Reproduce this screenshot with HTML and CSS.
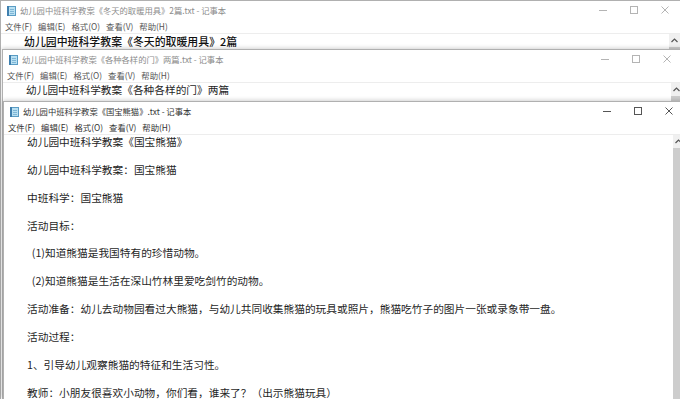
FILE: index.html
```html
<!DOCTYPE html>
<html lang="zh-CN">
<head>
    <meta charset="UTF-8">
    <meta name="viewport" content="width=device-width, initial-scale=1.0">
    <title>记事本</title>
    <link rel="stylesheet" href="styles.css">
</head>
<body>
    <div class="desktop">
        <!-- back window -->
        <section class="win win-back win-1">
            <header class="titlebar">
                <svg class="app-icon" viewBox="0 0 10 11"><rect x="1.5" y="1.5" width="8" height="9" fill="#b9e0f2" stroke="#5a9cc4"/><rect x="1" y="1" width="2" height="10" fill="#3f7fae"/><path d="M4 4.5h4M4 6.5h4M4 8.5h4" stroke="#7fb6d6"/></svg>
                <span class="title">幼儿园中班科学教案《冬天的取暖用具》2篇.txt - 记事本</span>
                <div class="controls">
                    <span class="ctl"><svg width="8" height="8" viewBox="0 0 8 8"><path d="M0 4.5H8" stroke="currentColor"/></svg></span>
                    <span class="ctl"><svg width="8" height="8" viewBox="0 0 8 8"><rect x="0.5" y="0.5" width="7" height="7" fill="none" stroke="currentColor"/></svg></span>
                    <span class="ctl"><svg width="8" height="8" viewBox="0 0 8 8"><path d="M0.5 0.5L7.5 7.5M7.5 0.5L0.5 7.5" stroke="currentColor"/></svg></span>
                </div>
            </header>
            <nav class="menubar">
                <span>文件(F)</span><span>编辑(E)</span><span>格式(O)</span><span>查看(V)</span><span>帮助(H)</span>
            </nav>
            <div class="body">
                <div class="doc doc-big">
                    <p>幼儿园中班科学教案《冬天的取暖用具》2篇</p>
                </div>
                <div class="scrollbar">
                    <span class="arrow"><svg width="7" height="5" viewBox="0 0 7 5"><path d="M0.5 4L3.5 1L6.5 4" fill="none" stroke="#555" stroke-width="1.2"/></svg></span>
                    <span class="thumb"></span>
                </div>
            </div>
        </section>

        <section class="win win-back win-2">
            <header class="titlebar">
                <svg class="app-icon" viewBox="0 0 10 11"><rect x="1.5" y="1.5" width="8" height="9" fill="#b9e0f2" stroke="#5a9cc4"/><rect x="1" y="1" width="2" height="10" fill="#3f7fae"/><path d="M4 4.5h4M4 6.5h4M4 8.5h4" stroke="#7fb6d6"/></svg>
                <span class="title">幼儿园中班科学教案《各种各样的门》两篇.txt - 记事本</span>
                <div class="controls">
                    <span class="ctl"><svg width="8" height="8" viewBox="0 0 8 8"><path d="M0 4.5H8" stroke="currentColor"/></svg></span>
                    <span class="ctl"><svg width="8" height="8" viewBox="0 0 8 8"><rect x="0.5" y="0.5" width="7" height="7" fill="none" stroke="currentColor"/></svg></span>
                    <span class="ctl"><svg width="8" height="8" viewBox="0 0 8 8"><path d="M0.5 0.5L7.5 7.5M7.5 0.5L0.5 7.5" stroke="currentColor"/></svg></span>
                </div>
            </header>
            <nav class="menubar">
                <span>文件(F)</span><span>编辑(E)</span><span>格式(O)</span><span>查看(V)</span><span>帮助(H)</span>
            </nav>
            <div class="body">
                <div class="doc">
                    <p>幼儿园中班科学教案《各种各样的门》两篇</p>
                </div>
                <div class="scrollbar">
                    <span class="arrow"><svg width="7" height="5" viewBox="0 0 7 5"><path d="M0.5 4L3.5 1L6.5 4" fill="none" stroke="#555" stroke-width="1.2"/></svg></span>
                    <span class="thumb"></span>
                </div>
            </div>
        </section>

        <!-- active window -->
        <section class="win win-3">
            <header class="titlebar">
                <svg class="app-icon" viewBox="0 0 10 11"><rect x="1.5" y="1.5" width="8" height="9" fill="#b9e0f2" stroke="#5a9cc4"/><rect x="1" y="1" width="2" height="10" fill="#3f7fae"/><path d="M4 4.5h4M4 6.5h4M4 8.5h4" stroke="#7fb6d6"/></svg>
                <span class="title">幼儿园中班科学教案《国宝熊猫》.txt - 记事本</span>
                <div class="controls">
                    <span class="ctl"><svg width="8" height="8" viewBox="0 0 8 8"><path d="M0 4.5H8" stroke="currentColor"/></svg></span>
                    <span class="ctl"><svg width="8" height="8" viewBox="0 0 8 8"><rect x="0.5" y="0.5" width="7" height="7" fill="none" stroke="currentColor"/></svg></span>
                    <span class="ctl"><svg width="8" height="8" viewBox="0 0 8 8"><path d="M0.5 0.5L7.5 7.5M7.5 0.5L0.5 7.5" stroke="currentColor"/></svg></span>
                </div>
            </header>
            <nav class="menubar">
                <span>文件(F)</span><span>编辑(E)</span><span>格式(O)</span><span>查看(V)</span><span>帮助(H)</span>
            </nav>
            <div class="body">
                <div class="doc">
                    <p>幼儿园中班科学教案《国宝熊猫》</p>
                    <p>幼儿园中班科学教案：国宝熊猫</p>
                    <p>中班科学：国宝熊猫</p>
                    <p>活动目标：</p>
                    <p>  (1)知道熊猫是我国特有的珍惜动物。</p>
                    <p>  (2)知道熊猫是生活在深山竹林里爱吃剑竹的动物。</p>
                    <p>活动准备：幼儿去动物园看过大熊猫，与幼儿共同收集熊猫的玩具或照片，熊猫吃竹子的图片一张或录象带一盘。</p>
                    <p>活动过程：</p>
                    <p>1、引导幼儿观察熊猫的特征和生活习性。</p>
                    <p>教师：小朋友很喜欢小动物，你们看，谁来了？（出示熊猫玩具）</p>
                </div>
                <div class="scrollbar">
                    <span class="arrow"><svg width="7" height="5" viewBox="0 0 7 5"><path d="M0.5 4L3.5 1L6.5 4" fill="none" stroke="#555" stroke-width="1.2"/></svg></span>
                    <span class="thumb"></span>
                </div>
            </div>
        </section>
    </div>
</body>
</html>
```

FILE: styles.css
```css
body {
    margin: 0;
    background: #fff;
    font-family: "Noto Sans CJK SC", "Noto Sans", sans-serif;
}
.desktop {
    position: relative;
    width: 680px;
    height: 399px;
    overflow: hidden;
    background: #fff;
}
.win {
    position: absolute;
    right: 0;
    bottom: 0;
    display: flex;
    flex-direction: column;
    background: #fff;
    border-top: 1px solid #b0b0b0;
    border-left: 1px solid #b0b0b0;
    box-shadow: 0 -1px 4px rgba(0, 0, 0, 0.18);
}
.win-1 {
    top: 0;
    left: 0;
}
.win-2 {
    top: 49px;
    left: 2px;
    right: -2px;
}
.win-3 {
    top: 101px;
    left: 3px;
    right: -4px;
}
.titlebar {
    height: 18px;
    flex: none;
    display: flex;
    align-items: center;
}
.app-icon {
    width: 10px;
    height: 11px;
    margin-left: 5px;
}
.title {
    margin-left: 4px;
    font-size: 8.3px;
    color: #8c8c8c;
    white-space: nowrap;
}
.controls {
    margin-left: auto;
    align-self: stretch;
    display: flex;
}
.ctl {
    width: 31px;
    display: flex;
    align-items: center;
    justify-content: center;
    color: #b4b4b4;
}
.menubar {
    height: 14px;
    flex: none;
    display: flex;
    align-items: center;
    gap: 6px;
    padding-left: 4px;
    font-size: 8.4px;
    color: #555;
    white-space: nowrap;
    border-bottom: 1px solid #ededed;
}
.body {
    flex: 1;
    min-height: 0;
    display: flex;
}
.doc {
    flex: 1;
    padding-left: 23px;
    font-size: 10.7px;
    line-height: 13.93px;
    color: #1f1f1f;
    overflow: hidden;
}
.doc p {
    margin: 0 0 13.93px;
    white-space: pre;
}
.doc-big {
    padding-top: 1px;
    font-size: 10.9px;
    font-weight: 500;
    color: #111;
}
.scrollbar {
    width: 11px;
    flex: none;
    display: flex;
    flex-direction: column;
    background: #f0f0f0;
}
.arrow {
    height: 12px;
    display: flex;
    align-items: center;
    justify-content: center;
}
.thumb {
    flex: 1;
    margin-top: 1px;
    background: #cdcdcd;
}
.win-3 .title {
    color: #333;
}
.win-3 .menubar {
    color: #333;
}
.win-3 .ctl {
    color: #555;
}
```
